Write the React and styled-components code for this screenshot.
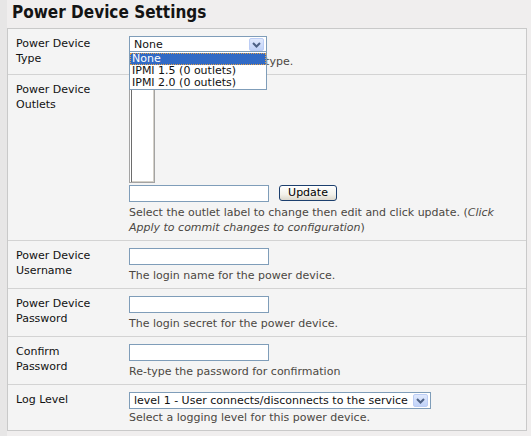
import { createGlobalStyle, styled } from "styled-components";

const GlobalStyle = createGlobalStyle`
  html, body {
    margin: 0;
    padding: 0;
    background: #e7e6e6;
  }
  body {
    font-family: "DejaVu Sans", Verdana, sans-serif;
    font-size: 11px;
    color: #111;
  }
`;

const deviceTypes = ["None", "IPMI 1.5 (0 outlets)", "IPMI 2.0 (0 outlets)"];

const Chevron = () => (
  <svg width="9" height="6" viewBox="0 0 9 6">
    <path d="M1 1 L4.5 4.5 L8 1" fill="none" stroke="#4d6185" strokeWidth="2" />
  </svg>
);

const FakeSelect = ({ value, width, open, options }) => (
  <SelectBox $width={width}>
    <SelectValue>{value}</SelectValue>
    <ArrowButton>
      <Chevron />
    </ArrowButton>
    {open && (
      <OptionList>
        {options.map((o) => (
          <OptionItem key={o} $selected={o === value}>{o}</OptionItem>
        ))}
      </OptionList>
    )}
  </SelectBox>
);

export default function App() {
  return (
    <Page>
      <GlobalStyle />
      <Panel>
        <Heading>Power Device Settings</Heading>
        <Table>
          <Row>
            <Label>Power Device Type</Label>
            <Field>
              <FakeSelect value="None" width={138} open options={deviceTypes} />
              <Help $tight>Select the power device type.</Help>
            </Field>
          </Row>
          <Row>
            <Label>Power Device Outlets</Label>
            <Field>
              <ListBox />
              <InlineControls>
                <TextInput type="text" />
                <UpdateButton>Update</UpdateButton>
              </InlineControls>
              <Help>
                Select the outlet label to change then edit and click update. (<em>Click Apply to commit changes to configuration</em>)
              </Help>
            </Field>
          </Row>
          <Row>
            <Label>Power Device Username</Label>
            <Field>
              <TextInput type="text" />
              <Help>The login name for the power device.</Help>
            </Field>
          </Row>
          <Row>
            <Label>Power Device Password</Label>
            <Field>
              <TextInput type="password" />
              <Help>The login secret for the power device.</Help>
            </Field>
          </Row>
          <Row>
            <Label>Confirm Password</Label>
            <Field>
              <TextInput type="password" />
              <Help>Re-type the password for confirmation</Help>
            </Field>
          </Row>
          <Row>
            <Label>Log Level</Label>
            <Field>
              <FakeSelect value="level 1 - User connects/disconnects to the service" width={302} />
              <Help $tight>Select a logging level for this power device.</Help>
            </Field>
          </Row>
        </Table>
      </Panel>
    </Page>
  );
}

const Page = styled.div`
  padding-left: 7px;
  min-height: 436px;
  box-sizing: border-box;
`;

const Panel = styled.div`
  background: #f0eeee;
  min-height: 436px;
`;

const Heading = styled.h1`
  margin: 0;
  padding: 0 5px;
  height: 28px;
  line-height: 24px;
  font-family: "DejaVu Sans Condensed", "DejaVu Sans", sans-serif;
  font-size: 17px;
  font-weight: bold;
  color: #141414;
`;

const Table = styled.div`
  margin-right: 4px;
  border: 1px solid #c9c9c9;
  background: #f4f4f4;
`;

const Row = styled.div`
  display: grid;
  grid-template-columns: 121px 1fr;
  & + & {
    border-top: 1px solid #d3d3d3;
  }
`;

const Label = styled.div`
  padding: 7px 8px 5px 8px;
  line-height: 15px;
  width: 80px;
`;

const Field = styled.div`
  padding: 7px 8px 5px 0;
  display: flex;
  flex-direction: column;
  align-items: flex-start;
`;

const Help = styled.div`
  margin-top: ${(p) => (p.$tight ? "1px" : "3px")};
  line-height: 15px;
  color: #4b4742;
  em {
    font-style: italic;
  }
`;

const SelectBox = styled.div`
  position: relative;
  width: ${(p) => p.$width}px;
  height: 17px;
  box-sizing: border-box;
  border: 1px solid #7f9db9;
  background: #fff;
  display: flex;
  align-items: center;
  justify-content: space-between;
  padding: 0 2px 0 4px;
`;

const SelectValue = styled.span`
  white-space: nowrap;
  line-height: 15px;
`;

const ArrowButton = styled.span`
  width: 15px;
  height: 13px;
  box-sizing: border-box;
  border: 1px solid #bccdf5;
  border-radius: 2px;
  background: linear-gradient(#e0e9fd, #c0d2f8);
  display: flex;
  align-items: center;
  justify-content: center;
`;

const OptionList = styled.div`
  position: absolute;
  top: 100%;
  left: -1px;
  right: -1px;
  margin-top: -1px;
  border: 1px solid #7f9db9;
  background: #fff;
  padding: 1px 0 0;
  z-index: 2;
`;

const OptionItem = styled.div`
  line-height: 12px;
  height: 12px;
  padding: 0 2px;
  white-space: nowrap;
  background: ${(p) => (p.$selected ? "#316ac5" : "transparent")};
  color: ${(p) => (p.$selected ? "#fff" : "#111")};
  outline: ${(p) => (p.$selected ? "1px dotted #e3a04a" : "none")};
  outline-offset: -1px;
`;

const ListBox = styled.div`
  width: 26px;
  height: 101px;
  box-sizing: border-box;
  border: 1px solid #a3a3a3;
  box-shadow: inset 1px 1px 0 #fff, inset 2px 2px 0 #6d6d6d, inset -1px -1px 0 #d4d0c8;
  background: #fff;
`;

const InlineControls = styled.div`
  margin-top: 2px;
  display: flex;
  align-items: flex-start;
  gap: 10px;
`;

const TextInput = styled.input`
  width: 140px;
  height: 17px;
  box-sizing: border-box;
  border: 1px solid #7f9db9;
  background: #fff;
  margin: 0;
  padding: 0 2px;
  font: inherit;
  outline: none;
`;

const UpdateButton = styled.button`
  width: 58px;
  height: 16px;
  box-sizing: border-box;
  margin: 0;
  padding: 0;
  border: 1px solid #1c3f6e;
  border-radius: 3px;
  background: linear-gradient(#ffffff, #f3f1ea 60%, #dcd8cc);
  font-family: "DejaVu Sans", Verdana, sans-serif;
  font-size: 11px;
  line-height: 14px;
  color: #000;
`;
